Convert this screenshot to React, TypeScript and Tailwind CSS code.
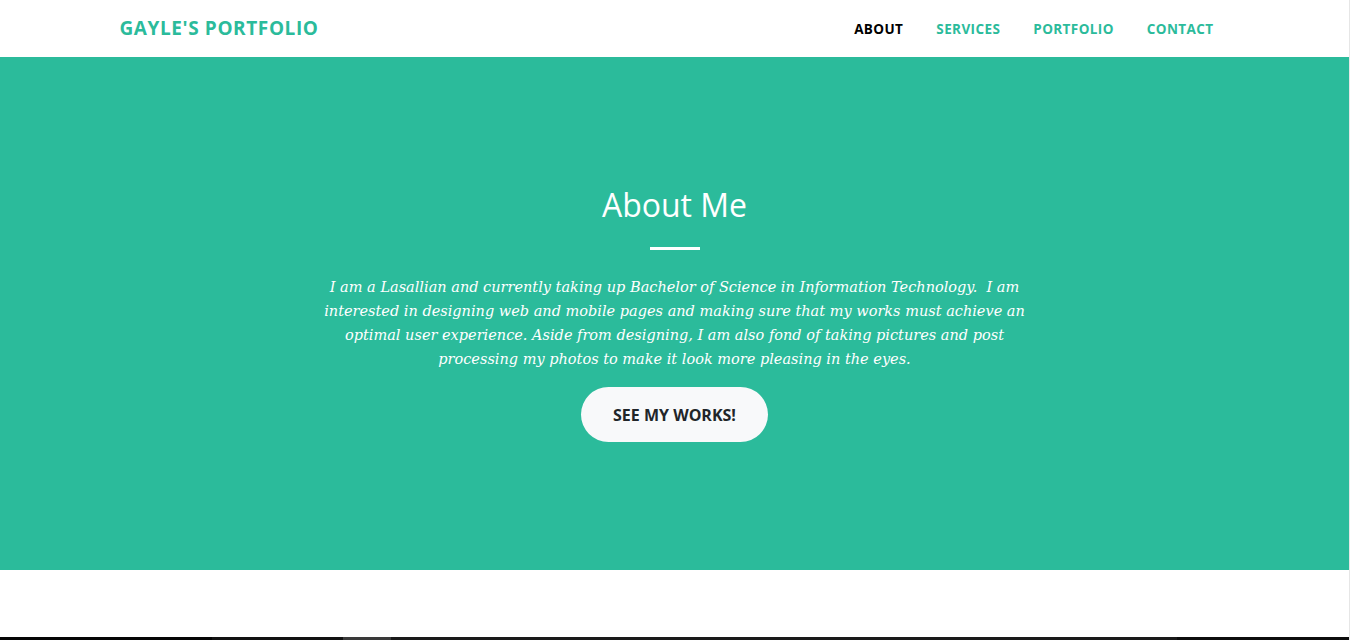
import React from 'react'

const links = ['About', 'Services', 'Portfolio', 'Contact']

// strip of the dark gallery that begins just below the fold
const tiles = [
  { w: 'w-[212px]', bg: 'bg-[#050505]' },
  { w: 'w-[131px]', bg: 'bg-[#121212]' },
  { w: 'w-[48px]', bg: 'bg-[#3a3a3a]' },
  { w: 'w-[786px]', bg: 'bg-[#1a1a1a]' },
  { w: 'flex-1', bg: 'bg-[#0d0d0d]' },
]

export default function App() {
  return (
    <div className="flex w-[1350px] bg-white" style={{ fontFamily: '"Open Sans", sans-serif' }}>
      <div className="w-[1349px]">
        {/* Navbar */}
        <nav className="h-[57px] bg-white">
          <div className="mx-auto flex h-full w-[1110px] items-center justify-between">
            <a className="text-[19px] font-bold tracking-[0.6px] text-[#2bbb9b]">GAYLE'S PORTFOLIO</a>
            <ul className="flex items-center gap-[33px] pt-[1px] pr-[16px]">
              {links.map((l, i) => (
                <li
                  key={l}
                  className={
                    'text-[13.5px] font-bold uppercase tracking-[0.4px] ' +
                    (i === 0 ? 'text-black' : 'text-[#2bbb9b]')
                  }
                >
                  {l}
                </li>
              ))}
            </ul>
          </div>
        </nav>

        {/* Masthead */}
        <header className="flex h-[513px] flex-col items-center bg-[#2bbb9b] pt-[124px] text-center">
          <h2 className="text-[32px] font-normal leading-[48px] text-white">About Me</h2>
          <hr className="mt-[18px] mb-[25px] h-[3px] w-[50px] border-0 bg-white" />
          <p
            className="w-[760px] text-[14.5px] italic leading-[24px] text-white"
            style={{ fontFamily: '"DejaVu Serif", serif' }}
          >
            I am a Lasallian and currently taking up Bachelor of Science in Information Technology.&nbsp; I am
            <br />
            interested in designing web and mobile pages and making sure that my works must achieve an
            <br />
            optimal user experience. Aside from designing, I am also fond of taking pictures and post
            <br />
            processing my photos to make it look more pleasing in the eyes.
          </p>
          <a className="mt-[16px] flex h-[55px] w-[187px] items-center justify-center rounded-full bg-[#f8f9fa] text-[16px] font-bold text-[#212529]">
            SEE MY WORKS!
          </a>
        </header>

        {/* Portfolio section top */}
        <section className="h-[67px] bg-white" />
        <div className="flex h-[3px]">
          {tiles.map((t, i) => (
            <div key={i} className={t.w + ' ' + t.bg} />
          ))}
        </div>
      </div>
      <div className="w-[1px] bg-[#e6e6e6]" />
    </div>
  )
}
